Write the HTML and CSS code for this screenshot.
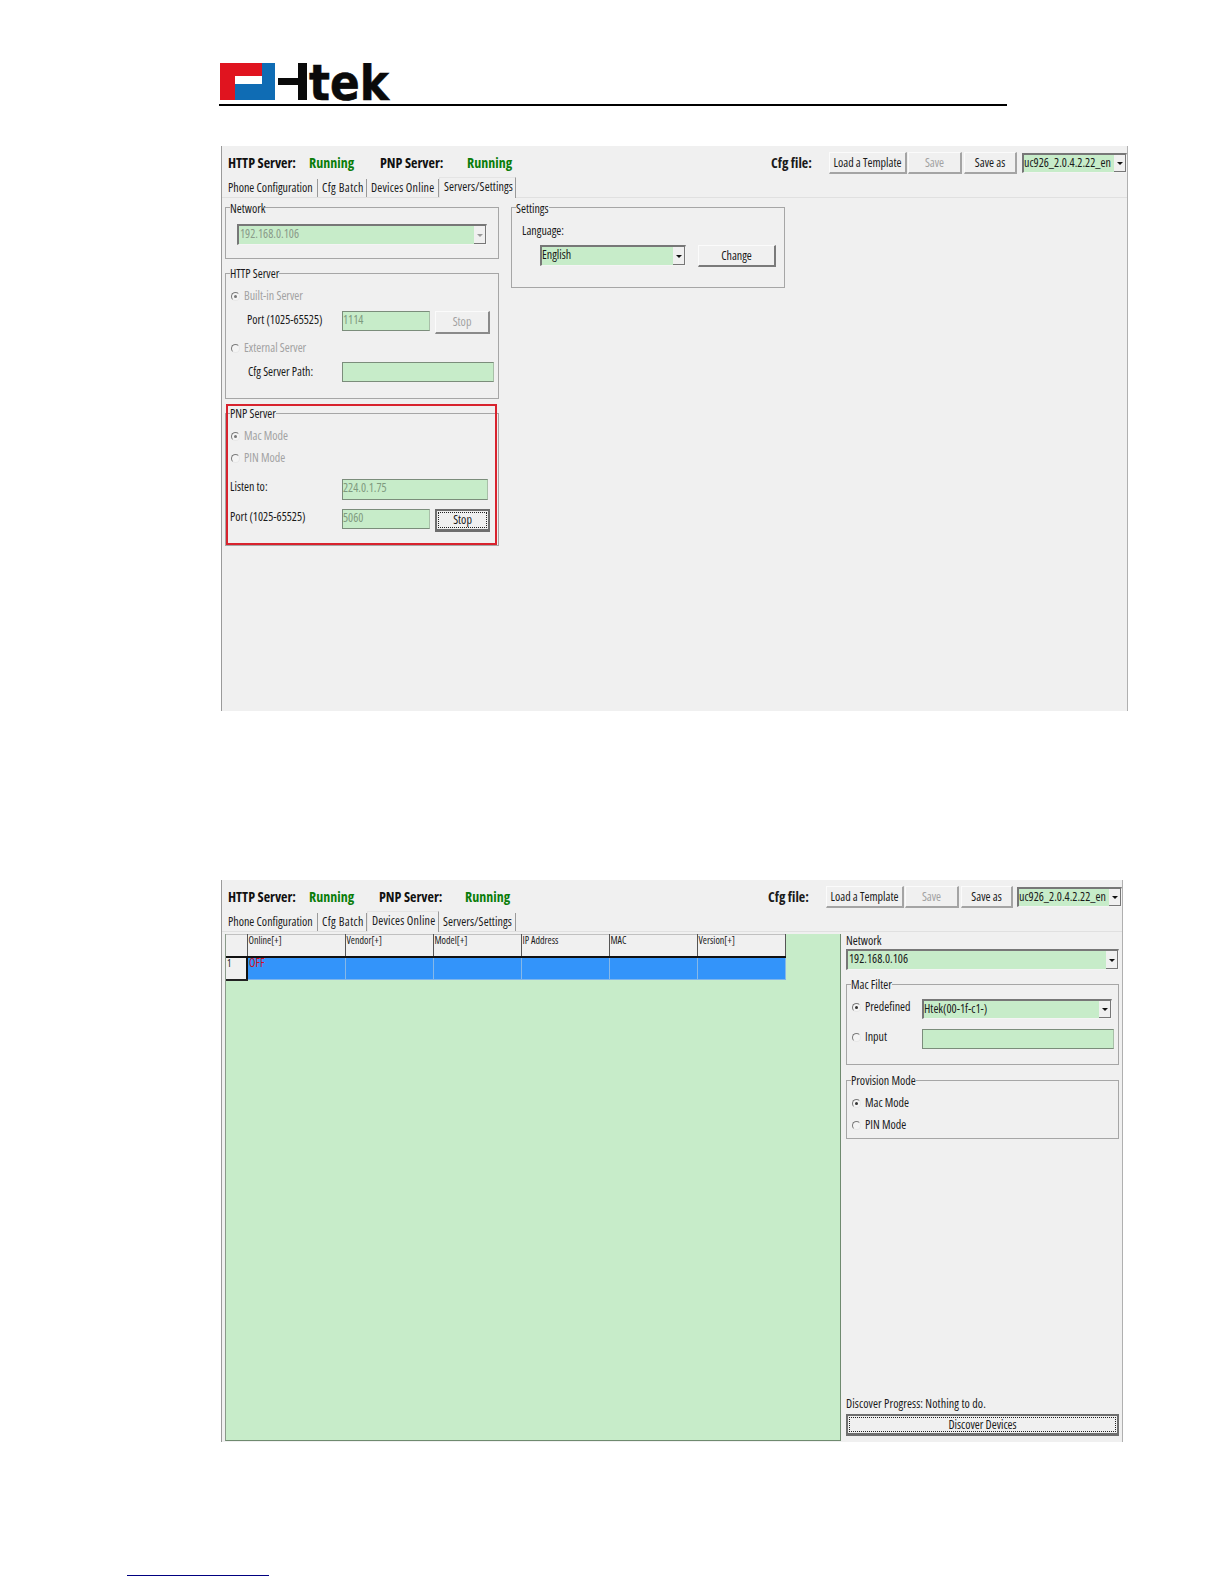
FILE: index.html
```html
<!DOCTYPE html>
<html lang="en">
<head>
<meta charset="utf-8">
<title>Htek</title>
<link rel="stylesheet" href="styles.css">
</head>
<body>
<header class="doc-head">
  <svg class="logo" width="184" height="38" viewBox="0 0 184 38" role="img" aria-label="Htek">
    <path class="lg-red" d="M0 0H42V13H15V37H0Z"/>
    <path class="lg-blue" d="M42 0H55V37H15V21H42Z"/>
    <path class="lg-blk" d="M58 15H78V0H87V37H78V22H58Z"/>
    <text class="lg-text" x="89" y="37" textLength="80" lengthAdjust="spacingAndGlyphs">tek</text>
  </svg>
  <div class="doc-rule"></div>
</header>

<section class="win win-a">
  <div class="status">
    <b class="s-http">HTTP Server:</b><b class="s-run">Running</b><b class="s-pnp">PNP Server:</b><b class="s-run2">Running</b>
    <div class="cfg">
      <b class="cfg-lbl">Cfg file:</b>
      <button class="btn lite b-load">Load a Template</button>
      <button class="btn lite b-save off">Save</button>
      <button class="btn lite b-saveas">Save as</button>
      <div class="combo c-cfg"><span>uc926_2.0.4.2.22_en</span><i class="arrow"></i></div>
    </div>
  </div>
  <nav class="tabs">
    <span class="tab t1">Phone Configuration</span><span class="tab t2">Cfg Batch</span><span class="tab t3">Devices Online</span><span class="tab t4 on">Servers/Settings</span>
  </nav>
  <div class="body-a">
    <div class="col-l">
      <fieldset class="grp g-net">
        <legend>Network</legend>
        <div class="combo off c-net"><span>192.168.0.106</span><i class="arrow"></i></div>
      </fieldset>
      <fieldset class="grp g-http">
        <legend>HTTP Server</legend>
        <div class="form-http">
          <label class="rad off c2"><i class="radio sel"></i>Built-in Server</label>
          <span class="lbl ind1">Port (1025-65525)</span><div class="field f-port off">1114</div><button class="btn b-stop off">Stop</button>
          <label class="rad off c2"><i class="radio"></i>External Server</label>
          <span class="lbl ind2">Cfg Server Path:</span><div class="field f-path c2w"></div>
        </div>
      </fieldset>
      <div class="pnp-wrap">
        <fieldset class="grp g-pnp">
          <legend>PNP Server</legend>
          <div class="form-pnp">
            <label class="rad off c2"><i class="radio sel"></i>Mac Mode</label>
            <label class="rad off c2"><i class="radio"></i>PIN Mode</label>
            <span class="lbl ind0">Listen to:</span><div class="field f-listen c2w off">224.0.1.75</div>
            <span class="lbl ind0">Port (1025-65525)</span><div class="field f-port off">5060</div><button class="btn b-stop focus"><span>Stop</span></button>
          </div>
        </fieldset>
        <div class="redbox"></div>
      </div>
    </div>
    <fieldset class="grp g-set">
      <legend>Settings</legend>
      <div class="set-in">
        <div class="lbl lang">Language:</div>
        <div class="set-row">
          <div class="combo c-lang"><span>English</span><i class="arrow"></i></div>
          <button class="btn b-change">Change</button>
        </div>
      </div>
    </fieldset>
  </div>
</section>

<section class="win win-b">
  <div class="status">
    <b class="s-http">HTTP Server:</b><b class="s-run">Running</b><b class="s-pnp">PNP Server:</b><b class="s-run2">Running</b>
    <div class="cfg">
      <b class="cfg-lbl">Cfg file:</b>
      <button class="btn lite b-load">Load a Template</button>
      <button class="btn lite b-save off">Save</button>
      <button class="btn lite b-saveas">Save as</button>
      <div class="combo c-cfg"><span>uc926_2.0.4.2.22_en</span><i class="arrow"></i></div>
    </div>
  </div>
  <nav class="tabs">
    <span class="tab t1">Phone Configuration</span><span class="tab t2">Cfg Batch</span><span class="tab t3 on">Devices Online</span><span class="tab t4">Servers/Settings</span>
  </nav>
  <div class="body-b">
    <div class="grid-area">
      <table class="dev">
        <colgroup><col class="w-h"><col class="w1"><col class="w2"><col class="w2"><col class="w2"><col class="w2"><col class="w2"></colgroup>
        <thead><tr><th></th><th>Online[+]</th><th>Vendor[+]</th><th>Model[+]</th><th>IP Address</th><th>MAC</th><th>Version[+]</th></tr></thead>
        <tbody><tr><th>1</th><td class="offline">OFF</td><td></td><td></td><td></td><td></td><td></td></tr></tbody>
      </table>
    </div>
    <aside class="side">
      <div class="lbl net-lbl">Network</div>
      <div class="combo c-net2"><span>192.168.0.106</span><i class="arrow"></i></div>
      <fieldset class="grp g-mac">
        <legend>Mac Filter</legend>
        <div class="form-mac">
          <label class="rad"><i class="radio sel"></i>Predefined</label><div class="combo c-mac"><span>Htek(00-1f-c1-)</span><i class="arrow"></i></div>
          <label class="rad"><i class="radio"></i>Input</label><div class="field f-mac"></div>
        </div>
      </fieldset>
      <fieldset class="grp g-prov">
        <legend>Provision Mode</legend>
        <div class="form-prov">
          <label class="rad"><i class="radio sel"></i>Mac Mode</label>
          <label class="rad"><i class="radio"></i>PIN Mode</label>
        </div>
      </fieldset>
      <div class="lbl progress">Discover Progress: Nothing to do.</div>
      <button class="btn b-disc focus"><span>Discover Devices</span></button>
    </aside>
  </div>
</section>

<footer class="doc-foot"></footer>
</body>
</html>
```

FILE: styles.css
```css
* { box-sizing: border-box; }
html, body { margin: 0; padding: 0; background: #fff; }
body {
  width: 1224px;
  height: 1584px;
  overflow: hidden;
  font-family: "Open Sans", "Liberation Sans", Arial, sans-serif;
  font-stretch: 75%;
  font-size: 12px;
  line-height: 16px;
  color: #1a1a1a;
}

/* document head */
.doc-head { padding: 63px 0 0 219px; height: 146px; }
.logo { display: block; margin-left: 1px; }
.lg-red { fill: #e0141f; }
.lg-blue { fill: #0f6cb4; }
.lg-blk { fill: #0a0a0a; }
.lg-text { font-family: "DejaVu Sans", sans-serif; font-weight: 700; font-stretch: 100%; font-size: 50px; fill: #0a0a0a; stroke: #0a0a0a; stroke-width: .6px; }
.doc-rule { width: 788px; height: 2px; margin-top: 3px; background: #000; }

/* windows */
.win { margin-left: 221px; background: #f0f0f0; border-left: 1px solid #9a9a9a; border-right: 1px solid #b0b0b0; }
.win-a { width: 907px; height: 565px; }
.win-b { width: 902px; height: 562px; margin-top: 169px; }

.status { display: flex; align-items: center; height: 32px; padding: 1px 0 0 6px; }
.status b { font-size: 14px; font-weight: 700; white-space: nowrap; }
.s-http { width: 81px; color: #111; }
.s-run { width: 71px; color: #0a7d0a; }
.s-pnp { width: 87px; color: #111; }
.s-run2 { color: #0a7d0a; }
.win-b .s-run { width: 70px; }
.win-b .s-pnp { width: 86px; }
.cfg { display: flex; align-items: center; margin-left: auto; padding-top: 1px; }
.cfg-lbl { width: 58px; }
.b-load { width: 78px; height: 22px; }
.b-save { width: 54px; height: 22px; margin-left: 1px; }
.b-saveas { width: 53px; height: 22px; margin-left: 2px; }
.c-cfg { width: 105px; height: 20px; margin-left: 5px; }
.win-b .b-saveas { width: 52px; }
.win-b .c-cfg { margin-left: 4px; }

.tabs { display: flex; align-items: flex-end; height: 20px; padding-left: 2px; border-bottom: 1px solid #e0e0e0; }
.tab { height: 18px; padding: 1px 0 0 4px; line-height: 16px; border-right: 1px solid #9a9a9a; white-space: nowrap; }
.t1 { width: 94px; }
.t2 { width: 49px; letter-spacing: .4px; }
.t3 { width: 72px; letter-spacing: .2px; }
.t4 { width: 77px; letter-spacing: .1px; }
.tab.on { height: 21px; margin-bottom: -1px; padding: 1px 0 0 4px; line-height: 15px; background: #f0f0f0; border: 1px solid #e4e4e4; border-right: 1px solid #9a9a9a; border-bottom: 0; }

/* shared controls */
.btn {
  display: block;
  padding: 0;
  font: inherit;
  color: #1a1a1a;
  background: #f0f0f0;
  border: 1px solid;
  border-color: #fbfbfb #7a7a7a #7a7a7a #fbfbfb;
  border-width: 1px 2px 2px 1px;
  text-align: center;
}
.btn.lite { border-color: #fbfbfb #a4a4a4 #a4a4a4 #fbfbfb; }
.btn.off { color: #a2a2a2; }
.btn.b-stop.off { border-color: #fbfbfb #8a8a8a #8a8a8a #fbfbfb; }
.btn.focus { border: 2px solid #6e6e6e; border-bottom-width: 3px; padding: 1px; }
.btn.focus span { display: block; height: 100%; border: 1px dotted #222; line-height: 14px; }

.combo {
  display: flex;
  align-items: stretch;
  background: #c7ecc9;
  border: 2px solid;
  border-color: #777 #f4f4f4 #f4f4f4 #777;
  border-width: 2px 1px 1px 2px;
  line-height: 16px;
  white-space: nowrap;
  overflow: hidden;
}
.combo > span { flex: 1; min-width: 0; overflow: hidden; }
.arrow { position: relative; display: block; flex: none; width: 12px; background: #f0f0f0; border-right: 1px solid #777; border-bottom: 1px solid #777; }
.arrow::after { content: ""; position: absolute; left: 3px; top: 50%; margin-top: -1px; border: 3px solid transparent; border-top-color: #111; border-bottom-width: 0; }
.combo.off { color: #8a9a8a; }
.combo.off .arrow::after { border-top-color: #999; }

.field { background: #c7ecc9; border: 1px solid #7b8d7b; border-right-color: #a8bfa8; line-height: 16px; height: 20px; }
.field.off { color: #7f9a7f; }

.grp { margin: 0; padding: 0; min-width: 0; border: 1px solid #a6a6a6; }
.grp legend { margin-left: 4px; padding: 0; line-height: 15px; height: 14px; }
.g-net legend, .g-set legend { line-height: 17px; }

.lbl { white-space: nowrap; }
.rad { display: flex; align-items: center; height: 16px; gap: 4px; white-space: nowrap; }
.rad.off { color: #a2a2a2; }
.radio { position: relative; display: block; flex: none; width: 9px; height: 9px; border-radius: 50%; border: 1px solid; border-color: #7a7a7a #e8e8e8 #e8e8e8 #7a7a7a; background: #f4f4f4; }
.radio.sel::after { content: ""; position: absolute; left: 2px; top: 2px; width: 3px; height: 3px; border-radius: 50%; background: #333; }
.rad.off .radio.sel::after { background: #777; }
.c2 { grid-column: 1 / -1; }
.c2w { grid-column: 2 / -1; }
.ind0 { padding-left: 4px; }
.ind1 { padding: 1px 0 0 21px; }
.ind2 { padding-left: 22px; padding-top: 2px; }

/* screen A */
.body-a { display: flex; align-items: flex-start; gap: 12px; padding: 2px 0 0 3px; }
.col-l { display: flex; flex-direction: column; gap: 7px; width: 274px; }
.g-net { height: 59px; }
.c-net { width: 250px; height: 21px; margin: 10px 0 0 11px; padding-left: 1px; }
.g-http { height: 133px; }
.g-pnp { height: 140px; }
.form-http, .form-pnp { display: grid; grid-template-columns: 116px 93px 60px; justify-items: start; }
.form-http { padding-top: 8px; grid-template-rows: 23px 29px 22px 20px; }
.form-http > .rad, .form-pnp > .rad { margin-left: 5px; }
.form-pnp { padding-top: 8px; grid-template-rows: 22px 29px 30px 23px; }
.f-port { width: 88px; }
.f-path { width: 152px; }
.f-listen { width: 146px; height: 21px; }
.b-stop { width: 55px; height: 23px; }
.pnp-wrap { position: relative; }
.redbox { position: absolute; left: 1px; top: -2px; width: 271px; height: 141px; border: 2px solid #d8232e; pointer-events: none; }
.g-set { width: 274px; height: 88px; }
.set-in { padding: 9px 0 0 10px; }
.lang { height: 16px; }
.set-row { display: flex; align-items: flex-start; gap: 12px; margin: 6px 0 0 18px; }
.c-lang { width: 146px; height: 21px; }
.b-change { width: 78px; height: 22px; }

/* screen B */
.body-b { display: flex; gap: 5px; padding: 2px 0 0 3px; }
.grid-area { flex: none; width: 616px; height: 507px; background: #c7ecc9; border: 1px solid #6f8a6f; border-top: 0; border-left-color: #8a9a8a; }
.dev { width: 559px; table-layout: fixed; border-collapse: collapse; font-size: 10px; line-height: 10px; }
.w-h { width: 21px; }
.w1 { width: 98px; }
.w2 { width: 88px; }
.dev thead th { height: 22px; padding: 0 0 0 1px; text-align: left; vertical-align: top; font-weight: 400; background: #f0f0f0; border-top: 1px solid #c0c0c0; border-right: 1px solid #555; border-bottom: 2px solid #111; }
.dev tbody th { height: 23px; padding: 0 0 0 1px; text-align: left; vertical-align: top; font-weight: 400; background: #f0f0f0; border-right: 2px solid #111; border-bottom: 2px solid #222; }
.dev td { padding: 0 0 0 1px; vertical-align: top; background: #3394fa; border-right: 1px solid #86b8e8; border-bottom: 1px solid #7fb4ea; }
.dev td.offline { color: #d01020; font-size: 12px; }
.side { display: flex; flex-direction: column; width: 273px; height: 507px; padding-bottom: 5px; }
.net-lbl { height: 14px; line-height: 14px; }
.c-net2 { height: 21px; margin-top: 1px; padding-left: 1px; }
.g-mac { height: 88px; margin-top: 7px; }
.form-mac { display: grid; grid-template-columns: 69px 192px; grid-template-rows: 20px 20px; row-gap: 10px; padding: 8px 0 0 5px; justify-items: start; }
.form-mac .field { margin-left: 1px; }
.c-mac { width: 190px; height: 20px; margin-left: 1px; }
.f-mac { width: 192px; height: 20px; }
.g-prov { height: 66px; margin-top: 8px; }
.form-prov { display: flex; flex-direction: column; gap: 6px; padding: 8px 0 0 5px; }
.progress { height: 14px; line-height: 14px; margin-top: auto; letter-spacing: .1px; }
.b-disc { width: 273px; height: 22px; margin-top: 3px; }

.doc-foot { width: 142px; height: 1px; margin: 133px 0 0 127px; background: #000080; }
```
